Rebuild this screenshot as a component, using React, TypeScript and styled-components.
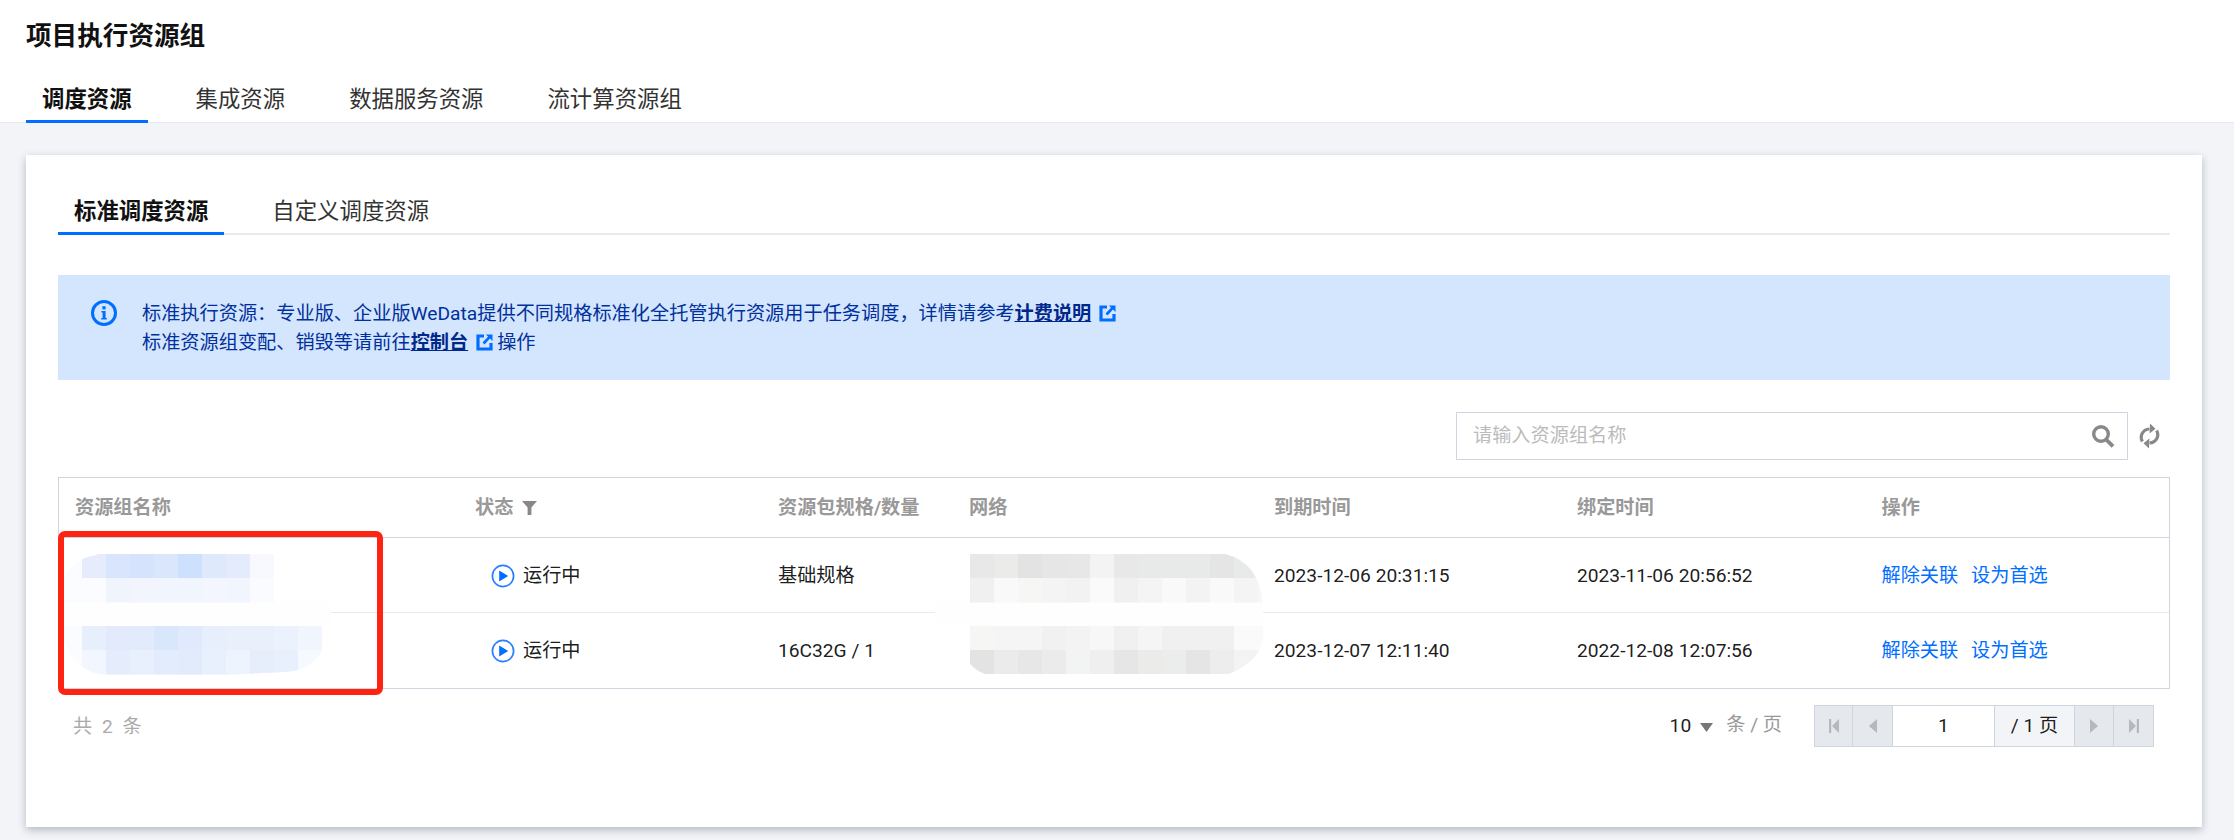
import React from "react";
import styled, { createGlobalStyle } from "styled-components";

const Global = createGlobalStyle`
  html, body { margin: 0; padding: 0; background: #f2f4f8; }
  body {
    font-family: Roboto, "Noto Sans CJK SC", "Noto Sans", sans-serif;
    font-size: 19.2px;
    line-height: 28.8px;
    color: rgba(0, 0, 0, 0.9);
  }
  * { box-sizing: border-box; }
`;

const Page = styled.div`
  width: 2234px;
  height: 840px;
  overflow: hidden;
  background: #f2f4f8;
`;

const Header = styled.header`
  height: 123px;
  background: #fff;
  padding: 0 26px;
  display: flex;
  flex-direction: column;
  box-shadow: inset 0 -1px 0 #e7eaef;
`;

const Title = styled.h1`
  margin: 19px 0 0;
  font-size: 25.6px;
  line-height: 34px;
  font-weight: 700;
  color: #111;
`;

const TabRow = styled.nav<{ $gap: number; $line?: boolean }>`
  display: flex;
  gap: ${(p) => p.$gap}px;
  height: 49px;
  margin-top: auto;
  box-shadow: ${(p) => (p.$line ? "inset 0 -2px 0 #e7eaef" : "none")};
`;

const Tab = styled.a<{ $active?: boolean }>`
  height: 49px;
  padding: 2px 16px 0;
  font-size: 22.4px;
  line-height: 47px;
  font-weight: ${(p) => (p.$active ? 700 : 400)};
  color: ${(p) => (p.$active ? "#111" : "#333")};
  border-bottom: 3px solid ${(p) => (p.$active ? "#006eff" : "transparent")};
`;

const Card = styled.main`
  margin: 32px 32px 0 26px;
  height: 672px;
  padding: 31px 32px 0;
  background: #fff;
  box-shadow: 0 3px 8px rgba(54, 58, 80, 0.32);
`;

const Notice = styled.section`
  margin-top: 40px;
  height: 105px;
  padding: 25px 0 0 33px;
  display: flex;
  gap: 25px;
  background: #d4e5fe;
  color: #00309c;
`;

const NoticeIcon = styled.svg`
  width: 26px;
  height: 26px;
  flex: none;
`;

const NoticeText = styled.div`
  line-height: 28.8px;
`;

const NoticeLink = styled.a`
  font-weight: 700;
  color: #00288a;
  text-decoration: underline;
`;

const OutIcon = styled.svg`
  display: inline-block;
  width: 17px;
  height: 17px;
  margin: 0 4px 0 8px;
  vertical-align: -2px;
`;

const Toolbar = styled.div`
  margin-top: 32px;
  padding-right: 10px;
  display: flex;
  justify-content: flex-end;
  align-items: center;
  gap: 11px;
`;

const SearchBox = styled.label`
  width: 672px;
  height: 48px;
  border: 1px solid #cfd5de;
  display: flex;
  align-items: center;
  padding: 0 12px 0 16px;
`;

const SearchInput = styled.input`
  flex: 1;
  min-width: 0;
  border: 0;
  outline: 0;
  padding: 0;
  background: transparent;
  font: inherit;
  &::placeholder { color: #bbb; opacity: 1; }
`;

const SearchIcon = styled.svg`
  width: 24px;
  height: 24px;
  flex: none;
`;

const RefreshIcon = styled.svg`
  width: 21px;
  height: 26px;
  flex: none;
`;

const Table = styled.div`
  position: relative;
  margin-top: 17px;
  height: 212px;
  border: 1px solid #cfd5de;
`;

const Row = styled.div<{ $head?: boolean; $last?: boolean }>`
  display: grid;
  grid-template-columns: 400px 303px 191px 305px 303px 304.5px 1fr;
  align-items: center;
  height: ${(p) => (p.$head ? 60 : p.$last ? 74 : 75)}px;
  border-bottom: ${(p) =>
    p.$last ? "0" : p.$head ? "1px solid #cfd5de" : "1px solid #e7eaef"};
`;

const HeadCell = styled.div`
  padding: 1px 0 0 16px;
  font-weight: 700;
  color: #999;
  display: flex;
  align-items: center;
  gap: 9px;
`;

const Cell = styled.div`
  padding: 2px 0 0 16px;
  white-space: nowrap;
  display: flex;
  align-items: center;
`;

const Status = styled.span`
  margin-left: 16px;
  display: flex;
  align-items: center;
  gap: 8px;
`;

const PlayIcon = styled.svg`
  width: 24px;
  height: 24px;
  flex: none;
`;

const ActionLink = styled.a`
  color: #006eff;
  margin-right: 12.8px;
`;

const Mosaic = styled.svg<{ $x: number; $y: number }>`
  position: absolute;
  left: ${(p) => p.$x}px;
  top: ${(p) => p.$y}px;
  overflow: visible;
`;

const RedFrame = styled.div`
  position: absolute;
  left: -1px;
  top: 53px;
  width: 325px;
  height: 164px;
  border: 6.5px solid #ff2314;
  border-radius: 7px;
`;

const Footer = styled.footer`
  margin-top: 16px;
  padding: 0 16px 0 15px;
  height: 42px;
  display: flex;
  align-items: center;
`;

const Total = styled.span`
  color: #aaa;
  word-spacing: 5px;
  position: relative;
  top: 1px;
`;

const PageSize = styled.span`
  margin-left: auto;
  display: flex;
  align-items: center;
  gap: 9px;
`;

const Caret = styled.svg`
  width: 13px;
  height: 9px;
  margin-top: 3px;
`;

const PerPage = styled.span`
  margin: 0 32px 0 13px;
  color: #999;
  position: relative;
  top: -1px;
`;

const Pager = styled.div`
  display: flex;
  height: 42px;
  border: 1px solid #cfd5de;
`;

const PagerItem = styled.div<{ $w: number; $bg: string; $last?: boolean }>`
  width: ${(p) => p.$w}px;
  background: ${(p) => p.$bg};
  border-right: ${(p) => (p.$last ? "0" : "1px solid #cfd5de")};
  display: flex;
  align-items: center;
  justify-content: center;
  line-height: 1;
`;

const PagerIcon = styled.svg`
  width: 14px;
  height: 14px;
`;

const blue = [
  ["#e7ecfc", "#d8e5fc", "#d5e4fc", "#dae6fc", "#cde0fe", "#dfe9fc", "#e3ebfc", "#f8f9fe"],
  ["#fbfcff", "#f0f5fd", "#f2f5fd", "#f1f5fd", "#f1f5fe", "#f3f6fe", "#f1f5fe", "#fafbff"],
];
const blue2 = [
  ["#e8effc", "#e2eafc", "#e2ebfc", "#d8e7fc", "#e0eafc", "#e8effc", "#e9f0fc", "#e9f0fc", "#ebf1fd", "#f1f5fe"],
  ["#f2f6fe", "#e5ecfc", "#e8effd", "#e3ecfd", "#e2ebfc", "#e9f0fd", "#eef4fe", "#e6eefc", "#e8effd", "#f6f9fe"],
];
const grey = [
  ["#e8e8e8", "#ebebe9", "#e3e3e3", "#e6e6e6", "#e7e7e7", "#f3f3f3", "#e8e8e8", "#e8e9e9", "#e8eaea", "#e8e9e9", "#e5e5e5", "#e8eaea", "#e8eaea"],
  ["#f0f0f0", "#f9f9f9", "#f6f6f5", "#f4f4f4", "#f2f2f2", "#fafafa", "#f0f0f0", "#f4f4f4", "#f9f9f9", "#f3f3f3", "#f9f9f9", "#f4f4f4", "#f7f7f7"],
];
const grey2 = [
  ["#f6f6f5", "#f5f5f5", "#f5f5f5", "#f1f1f1", "#f3f3f3", "#f7f7f7", "#f0f0f0", "#f5f5f5", "#f0f0f0", "#f0f0f0", "#f0f0f0", "#fafafa", "#fafafa"],
  ["#e3e3e3", "#ebebeb", "#e7e7e7", "#ebebeb", "#f2f4f4", "#efefef", "#e6e6e6", "#ebebe9", "#ebeded", "#e5e5e5", "#ededed", "#f3f3f3", "#f3f3f3"],
];

const Blocks = ({ rows, x, y }: { rows: string[][]; x: number; y: number }) => (
  <>
    {rows.flatMap((r, j) =>
      r.map((c, i) => (
        <rect key={`${x}-${y}-${i}-${j}`} x={x + i * 24} y={y + j * 24} width={24.5} height={24.5} fill={c} />
      ))
    )}
  </>
);

const External = () => (
  <OutIcon viewBox="0 0 17 17">
    <path d="M8 2H2v13h13V9" fill="none" stroke="#006eff" strokeWidth="3.2" />
    <path d="M10 0.5h6.5V7L14 4.6 8.5 10.5 6.5 8.4 12 2.8z" fill="#006eff" />
  </OutIcon>
);

const Play = () => (
  <PlayIcon viewBox="0 0 24 24">
    <circle cx="12" cy="12" r="10.6" fill="none" stroke="#2a7fff" strokeWidth="1.7" />
    <path d="M8.2 6.6v10.8l9-5.4z" fill="#006eff" />
  </PlayIcon>
);

const rows = [
  { spec: "基础规格", exp: "2023-12-06 20:31:15", bind: "2023-11-06 20:56:52" },
  { spec: "16C32G / 1", exp: "2023-12-07 12:11:40", bind: "2022-12-08 12:07:56" },
];

const columns = ["资源组名称", "状态", "资源包规格/数量", "网络", "到期时间", "绑定时间", "操作"];

export default function App() {
  return (
    <Page>
      <Global />
      <Header>
        <Title>项目执行资源组</Title>
        <TabRow $gap={32}>
          <Tab $active>调度资源</Tab>
          <Tab>集成资源</Tab>
          <Tab>数据服务资源</Tab>
          <Tab>流计算资源组</Tab>
        </TabRow>
      </Header>
      <Card>
        <TabRow $gap={32} $line>
          <Tab $active>标准调度资源</Tab>
          <Tab>自定义调度资源</Tab>
        </TabRow>
        <Notice>
          <NoticeIcon viewBox="0 0 26 26">
            <circle cx="13" cy="13" r="11.5" fill="none" stroke="#006eff" strokeWidth="3" />
            <rect x="11.4" y="6.2" width="3.2" height="3.2" fill="#006eff" />
            <path d="M10.4 11h4.2v7h1.2v1.6h-5.6V18h1.4v-5.4h-1.2z" fill="#006eff" />
          </NoticeIcon>
          <NoticeText>
            标准执行资源：专业版、企业版WeData提供不同规格标准化全托管执行资源用于任务调度，详情请参考
            <NoticeLink>计费说明</NoticeLink>
            <External />
            <br />
            标准资源组变配、销毁等请前往<NoticeLink>控制台</NoticeLink>
            <External />
            操作
          </NoticeText>
        </Notice>
        <Toolbar>
          <SearchBox>
            <SearchInput placeholder="请输入资源组名称" />
            <SearchIcon viewBox="0 0 24 24">
              <circle cx="10" cy="10" r="7.3" fill="none" stroke="#888" strokeWidth="3.4" />
              <path d="M15 15.4l7 7" stroke="#888" strokeWidth="3.8" />
            </SearchIcon>
          </SearchBox>
          <RefreshIcon viewBox="0 0 21 26">
            <path d="M3.4 18.5C.4 13.4 3.4 6.6 10.4 6" fill="none" stroke="#888" strokeWidth="3.2" />
            <path d="M11 .5l5.5 5.3L10.6 10.5z" fill="#888" />
            <path d="M17.6 7.5C20.6 12.6 17.6 19.4 10.6 20" fill="none" stroke="#888" strokeWidth="3.2" />
            <path d="M10 25.5L4.5 20.2l5.9-4.7z" fill="#888" />
          </RefreshIcon>
        </Toolbar>
        <Table>
          <Row $head>
            {columns.map((c) => (
              <HeadCell key={c}>
                {c}
                {c === "状态" && (
                  <svg width="15" height="14" viewBox="0 0 15 14">
                    <path d="M0 0h15L9.4 6.5V14H5.6V6.5z" fill="#888" />
                  </svg>
                )}
              </HeadCell>
            ))}
          </Row>
          {rows.map((r, i) => (
            <Row key={r.exp} $last={i === 1}>
              <Cell />
              <Cell>
                <Status>
                  <Play />
                  运行中
                </Status>
              </Cell>
              <Cell>{r.spec}</Cell>
              <Cell />
              <Cell>{r.exp}</Cell>
              <Cell>{r.bind}</Cell>
              <Cell>
                <ActionLink>解除关联</ActionLink>
                <ActionLink>设为首选</ActionLink>
              </Cell>
            </Row>
          ))}
          <Mosaic $x={1} $y={76} width={275} height={128} viewBox="0 0 275 128">
            <clipPath id="nameClip">
              <path d="M4 28Q8 6 36 1L38 0H214V48H271V72H262V96Q252 116 226 118L166 121H46Q14 118 4 86z" />
            </clipPath>
            <g clipPath="url(#nameClip)">
              <rect x="0" y="0" width="275" height="128" fill="#fbfcff" />
              <rect x="0" y="48" width="275" height="24" fill="#fefefe" />
              <Blocks rows={blue} x={22} y={0} />
              <Blocks rows={blue2} x={22} y={72} />
            </g>
          </Mosaic>
          <Mosaic $x={876} $y={76} width={328} height={120} viewBox="0 0 328 120">
            <clipPath id="netClip">
              <path d="M35 0H290Q324 8 328 50V85Q324 108 294 120H50Q40 116 35 110z" />
            </clipPath>
            <rect x="0" y="48" width="328" height="24" fill="#fefefe" />
            <g clipPath="url(#netClip)">
              <Blocks rows={grey} x={35} y={0} />
              <Blocks rows={grey2} x={35} y={72} />
            </g>
          </Mosaic>
          <RedFrame />
        </Table>
        <Footer>
          <Total>共 2 条</Total>
          <PageSize>
            10
            <Caret viewBox="0 0 13 9">
              <path d="M0 0h13L6.5 9z" fill="#777" />
            </Caret>
          </PageSize>
          <PerPage>条 / 页</PerPage>
          <Pager>
            <PagerItem $w={38} $bg="#e5e8ed">
              <PagerIcon viewBox="0 0 14 14">
                <path d="M2 0h2.2v14H2zM12 0v14L5 7z" fill="#b5b8bd" />
              </PagerIcon>
            </PagerItem>
            <PagerItem $w={40} $bg="#e5e8ed">
              <PagerIcon viewBox="0 0 14 14">
                <path d="M11 0v14L3 7z" fill="#b5b8bd" />
              </PagerIcon>
            </PagerItem>
            <PagerItem $w={102} $bg="#fff">1</PagerItem>
            <PagerItem $w={80} $bg="#f2f4f8">/ 1 页</PagerItem>
            <PagerItem $w={39} $bg="#e5e8ed">
              <PagerIcon viewBox="0 0 14 14">
                <path d="M3 0v14l8-7z" fill="#b5b8bd" />
              </PagerIcon>
            </PagerItem>
            <PagerItem $w={39} $bg="#e5e8ed" $last>
              <PagerIcon viewBox="0 0 14 14">
                <path d="M2 0v14l7-7zM9.8 0H12v14H9.8z" fill="#b5b8bd" />
              </PagerIcon>
            </PagerItem>
          </Pager>
        </Footer>
      </Card>
    </Page>
  );
}
